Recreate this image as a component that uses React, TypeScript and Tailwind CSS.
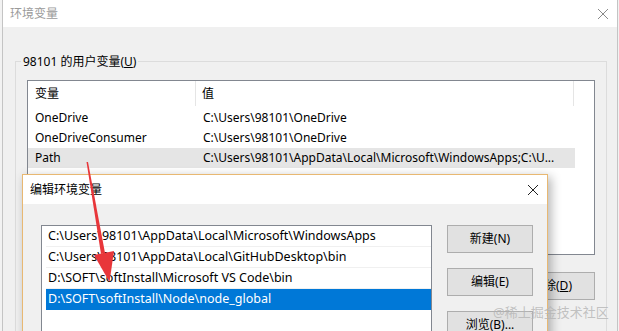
import React from "react";

const CloseIcon = ({ color = "#222" }: { color?: string }) => (
  <svg width="12" height="12" viewBox="0 0 12 12">
    <path d="M1 1L11 11M11 1L1 11" stroke={color} strokeWidth="1" fill="none" />
  </svg>
);

const userVars = [
  { name: "OneDrive", value: "C:\\Users\\98101\\OneDrive" },
  { name: "OneDriveConsumer", value: "C:\\Users\\98101\\OneDrive" },
  {
    name: "Path",
    value: "C:\\Users\\98101\\AppData\\Local\\Microsoft\\WindowsApps;C:\\U...",
  },
];

const pathItems = [
  "C:\\Users\\98101\\AppData\\Local\\Microsoft\\WindowsApps",
  "C:\\Users\\98101\\AppData\\Local\\GitHubDesktop\\bin",
  "D:\\SOFT\\softInstall\\Microsoft VS Code\\bin",
  "D:\\SOFT\\softInstall\\Node\\node_global",
];

const WinButton = ({ children }: { children: React.ReactNode }) => (
  <div className="w-[86px] h-[28px] flex items-center justify-center bg-[#e1e1e1] border border-[#adadad] text-[12px] text-black">
    {children}
  </div>
);

export default function App() {
  return (
    <div className="relative w-[619px] h-[331px] overflow-hidden bg-[#f2f2f2] font-['Noto_Sans','Noto_Sans_CJK_SC',sans-serif] text-[12px] text-black">
      {/* outer window: 环境变量 */}
      <div className="ml-[2px] w-[616px] h-full border-x border-[#c4c4c4] flex flex-col">
        <div className="h-[27px] shrink-0 bg-white flex items-center justify-between pl-[7px] pr-[8px]">
          <span className="text-[#9a9a9a]">环境变量</span>
          <CloseIcon color="#8a8a8a" />
        </div>
        <div className="flex-1 bg-[#f0f0f0] pt-[34px] pl-[12px] pr-[10px]">
          <div className="relative border border-[#dcdcdc] h-[300px] pt-[18px] px-[11px]">
            <span className="absolute -top-[9px] left-[5px] px-[2px] bg-[#f0f0f0] leading-[18px]">
              98101 的用户变量(<span className="underline">U</span>)
            </span>
            <div className="h-[175px] border border-[#828790] bg-white">
              <div className="flex h-[25px] items-stretch">
                <div className="w-[168px] pl-[7px] flex items-center border-r border-[#e5e5e5]">
                  变量
                </div>
                <div className="w-[378px] pl-[6px] flex items-center border-r border-[#e5e5e5]">
                  值
                </div>
              </div>
              <div className="pt-[2px]">
                {userVars.map((v) => (
                  <div
                    key={v.name}
                    className={`flex h-[20px] w-[547px] items-center ${v.name === "Path" ? "bg-[#e5e5e5]" : ""}`}
                  >
                    <div className="w-[168px] pl-[7px] whitespace-nowrap">{v.name}</div>
                    <div className="pl-[7px] whitespace-nowrap">{v.value}</div>
                  </div>
                ))}
              </div>
            </div>
            <div className="flex justify-end mt-[17px]">
              <WinButton>
                删除(<span className="underline">D</span>)
              </WinButton>
            </div>
          </div>
        </div>
      </div>

      {/* inner dialog: 编辑环境变量 */}
      <div className="absolute left-[22px] top-[174px] w-[526px] h-[180px] border border-[#e8b872] bg-[#f0f0f0] shadow-[3px_3px_10px_rgba(0,0,0,0.3)] flex flex-col">
        <div className="h-[29px] shrink-0 bg-white flex items-center justify-between pl-[7px] pr-[8px]">
          <span>编辑环境变量</span>
          <CloseIcon />
        </div>
        <div className="flex pt-[21px] pl-[18px] gap-[15px]">
          <div className="w-[391px] h-[140px] border border-[#828790] bg-white pl-[4px] text-[12.5px]">
            {pathItems.map((p, i) => (
              <div
                key={p}
                className={`h-[21px] pl-[2px] flex items-center whitespace-nowrap ${
                  i === 3 ? "bg-[#0078d7] text-white" : "border-b border-[#f0f0f0]"
                }`}
              >
                {p}
              </div>
            ))}
          </div>
          <div className="flex flex-col gap-[15px]">
            <WinButton>新建(N)</WinButton>
            <WinButton>编辑(E)</WinButton>
            <WinButton>浏览(B)...</WinButton>
          </div>
        </div>
      </div>

      {/* red annotation arrow */}
      <svg className="absolute left-0 top-0" width="619" height="331" viewBox="0 0 619 331">
        <polygon points="86.5,162 88,162 105,253 101,254" fill="#e8363a" />
        <polygon points="94,255 114,251 109.5,282" fill="#e8363a" />
      </svg>

      {/* watermark */}
      <span className="absolute left-[493px] top-[303px] text-[13px] text-[#b4b4b4]/80 whitespace-nowrap">
        @稀土掘金技术社区
      </span>
    </div>
  );
}
